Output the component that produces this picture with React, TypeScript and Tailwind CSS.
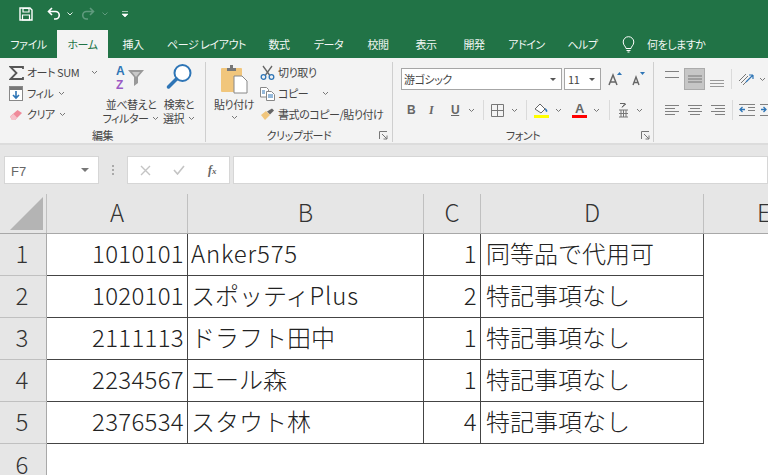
import type { ReactNode } from 'react';

const jp = "font-['Noto_Sans_CJK_JP','Liberation_Sans',sans-serif]";
const palt = "[font-feature-settings:'palt'] tracking-[-0.45px]";

function Chev({ className = '' }: { className?: string }) {
  return (
    <svg width="7" height="5" viewBox="0 0 7 5" className={`shrink-0 ${className}`}>
      <path d="M1 1l2.500 2.500L6 1" fill="none" stroke="#777" strokeWidth="1" />
    </svg>
  );
}

function Launcher() {
  return (
    <svg width="9" height="9" viewBox="0 0 9 9" className="shrink-0">
      <path d="M.5 8V.5H8M3 3l5 5M8 4.500V8H4.500" fill="none" stroke="#777" strokeWidth="1" />
    </svg>
  );
}

function Sep({ className = '' }: { className?: string }) {
  return <div className={`w-px h-[20px] bg-[#dadada] shrink-0 ${className}`} />;
}

function GroupLabel({ children }: { children: ReactNode }) {
  return <div className="text-[11px] leading-[14px] text-[#444] text-center">{children}</div>;
}

// latin runs in the sheet are a little wider than the fallback font
function Spaced({ text }: { text: string }) {
  return (
    <>
      {text.split(/([A-Za-z0-9]+)/).map((part, i) => {
        if (/^\d+$/.test(part)) {
          return (
            <span key={i} className="tracking-[0.3px]">
              {part}
            </span>
          );
        }
        if (/[A-Za-z]/.test(part)) {
          return (
            <span key={i} className="tracking-[0.8px]">
              {part}
            </span>
          );
        }
        return part;
      })}
    </>
  );
}

function CellText({ right, className = '', children }: { right?: boolean; className?: string; children: string }) {
  return (
    <div
      className={`flex items-center h-full pb-[3px] text-[24px] text-[#222] font-light whitespace-nowrap ${
        right ? 'justify-end pr-[3px]' : ''
      } ${className}`}
    >
      <Spaced text={children} />
    </div>
  );
}

const tabs = [
  { label: '挿入', w: 'w-[50px]' },
  { label: 'ページ レイアウト', w: 'w-[97px]' },
  { label: '数式', w: 'w-[48px]' },
  { label: 'データ', w: 'w-[51px]' },
  { label: '校閲', w: 'w-[48px]' },
  { label: '表示', w: 'w-[48px]' },
  { label: '開発', w: 'w-[48px]' },
  { label: 'アドイン', w: 'w-[57px]' },
  { label: 'ヘルプ', w: 'w-[55px]' },
];

const rows = [
  ['1010101', 'Anker575', '1', '同等品で代用可'],
  ['1020101', 'スポッティPlus', '2', '特記事項なし'],
  ['2111113', 'ドラフト田中', '1', '特記事項なし'],
  ['2234567', 'エール森', '1', '特記事項なし'],
  ['2376534', 'スタウト林', '4', '特記事項なし'],
];

const gridCols = 'grid-cols-[47px_141px_236px_57px_223px_1fr]';

function TitleBar() {
  return (
    <div className="flex items-center h-[30px] bg-[#217346] pl-[19px] pb-[3px]">
      <svg width="14" height="14" viewBox="0 0 14 14" className="shrink-0">
        <path d="M1 1h10l2 2v10H1z" fill="none" stroke="#fff" strokeWidth="1.400" />
        <path d="M4 1.500h6v3.500H4zM3.500 8h7v5h-7z" fill="none" stroke="#fff" strokeWidth="1.200" />
      </svg>
      <svg width="14" height="13" viewBox="0 0 14 13" className="shrink-0 ml-[14px]">
        <path d="M5 1L1.500 4.500 5 8M2 4.500h6.500a3.700 3.700 0 0 1 0 7.500H7" fill="none" stroke="#fff" strokeWidth="1.600" />
      </svg>
      <svg width="6" height="4" viewBox="0 0 6 4" className="shrink-0 ml-[6px]">
        <path d="M.5.500L3 3 5.500.5" fill="none" stroke="#e4efe9" strokeWidth="1" />
      </svg>
      <svg width="14" height="13" viewBox="0 0 14 13" className="shrink-0 ml-[8px]">
        <path d="M9 1l3.500 3.500L9 8M12 4.500H5.500a3.700 3.700 0 0 0 0 7.500H7" fill="none" stroke="#5f9a7d" strokeWidth="1.600" />
      </svg>
      <svg width="6" height="4" viewBox="0 0 6 4" className="shrink-0 ml-[7px]">
        <path d="M.5.500L3 3 5.500.5" fill="none" stroke="#5f9a7d" strokeWidth="1" />
      </svg>
      <svg width="6" height="6" viewBox="0 0 6 6" className="shrink-0 ml-[14px]">
        <path d="M0 .5h6M0 3h6L3 6z" fill="#fff" stroke="#fff" strokeWidth=".6" />
      </svg>
    </div>
  );
}

function TabBar() {
  return (
    <div className={`${palt} flex items-center h-[28px] bg-[#217346] text-[11px] text-[#f2f7f4]`}>
      <div className="w-[57px] text-center">ファイル</div>
      <div className="w-[51px] h-full flex items-center justify-center bg-[#f3f3f3] text-[#217346]">ホーム</div>
      {tabs.map((t) => (
        <div key={t.label} className={`${t.w} text-center whitespace-nowrap`}>
          {t.label}
        </div>
      ))}
      <svg width="13" height="17" viewBox="0 0 13 17" className="shrink-0 ml-[12px]">
        <path
          d="M4 12.500c0-2-2.800-3-2.800-6.500a5.300 5.300 0 0 1 10.600 0c0 3.500-2.800 4.500-2.800 6.500zM4.500 14.500h4M5.500 16h2"
          fill="none"
          stroke="#fff"
          strokeWidth="1"
        />
      </svg>
      <div className="ml-[12px] whitespace-nowrap">何をしますか</div>
    </div>
  );
}

function EditGroup() {
  return (
    <div className="w-[206px] shrink-0 flex flex-col border-r border-[#cfcfcf] my-[4px] h-[80px]">
      <div className="flex h-[68px]">
        <div className="w-[104px] shrink-0 flex flex-col text-[11px] text-[#444] pl-[9px]">
          <div className="flex items-center h-[21px]">
            <svg width="15" height="14" viewBox="0 0 15 14" className="shrink-0">
              <path d="M14 3V1H1.500L7.500 7l-6 6H14v-2" fill="none" stroke="#555" strokeWidth="1.800" />
            </svg>
            <span className="ml-[3px] whitespace-nowrap">オート SUM</span>
            <Chev className="ml-[12px]" />
          </div>
          <div className="flex items-center h-[21px]">
            <svg width="14" height="15" viewBox="0 0 14 15" className="shrink-0">
              <rect x=".5" y=".5" width="13" height="14" fill="#fff" stroke="#888" />
              <rect x="1" y="1" width="12" height="3" fill="#777" />
              <path d="M7 5v7M4 9l3 3 3-3" fill="none" stroke="#2e75b6" strokeWidth="1.600" />
            </svg>
            <span className="ml-[4px] whitespace-nowrap">フィル</span>
            <Chev className="ml-[5px]" />
          </div>
          <div className="flex items-center h-[21px]">
            <svg width="14" height="12" viewBox="0 0 14 12" className="shrink-0">
              <path d="M1 7.500L8.500 1 13 4l-7 7H3z" fill="#ef8a9a" />
              <path d="M1 7.500L4.500 5 8 8.500 6 11H3z" fill="#f6c1ca" />
            </svg>
            <span className="ml-[4px] whitespace-nowrap">クリア</span>
            <Chev className="ml-[4px]" />
          </div>
        </div>
        <div className="w-[54px] shrink-0 flex flex-col items-center text-[11px] leading-[14px] text-[#444]">
          <svg width="30" height="26" viewBox="0 0 30 26" className="shrink-0 mt-[2px] mb-[7px]">
            <text x="0" y="11" fontSize="12" fontWeight="700" fill="#2e75b6" fontFamily="Liberation Sans">A</text>
            <text x="0" y="25" fontSize="12" fontWeight="700" fill="#9b59c4" fontFamily="Liberation Sans">Z</text>
            <path d="M12 6h16l-6 7v6l-4 3v-9z" fill="#999" />
            <path d="M16 8h8l-4 5z" fill="#c9c9c9" />
          </svg>
          <div className="whitespace-nowrap">並べ替えと</div>
          <div className="flex items-center whitespace-nowrap">
            フィルター
            <Chev className="ml-[4px]" />
          </div>
        </div>
        <div className="w-[42px] shrink-0 flex flex-col items-center text-[11px] leading-[14px] text-[#444]">
          <svg width="27" height="28" viewBox="0 0 27 28" className="shrink-0 mt-[1px] mb-[6px]">
            <circle cx="16.500" cy="10" r="8" fill="#fff" stroke="#2e75b6" strokeWidth="2" />
            <path d="M10.500 16L2.500 24" stroke="#2e75b6" strokeWidth="3.500" strokeLinecap="round" />
          </svg>
          <div className="whitespace-nowrap">検索と</div>
          <div className="flex items-center whitespace-nowrap">
            選択
            <Chev className="ml-[4px]" />
          </div>
        </div>
      </div>
      <GroupLabel>編集</GroupLabel>
    </div>
  );
}

function ClipboardGroup() {
  return (
    <div className="w-[187px] shrink-0 flex flex-col border-r border-[#cfcfcf] my-[4px] h-[80px]">
      <div className="flex h-[68px] text-[11px] text-[#444]">
        <div className="w-[50px] ml-[3px] shrink-0 flex flex-col items-center">
          <svg width="27" height="30" viewBox="0 0 27 30" className="shrink-0 mt-[2px]">
            <rect x="0" y="4" width="21" height="24" rx="1" fill="#f1c67c" />
            <path d="M6 4h3V1h3v3h3v3H6z" fill="#777" />
            <path d="M13 12h8l5 5v12H13z" fill="#fff" stroke="#888" />
          </svg>
          <div className="whitespace-nowrap leading-[14px] mt-[3px]">貼り付け</div>
          <Chev className="mt-[4px]" />
        </div>
        <div className="flex flex-col ml-[1px]">
          <div className="flex items-center h-[21px]">
            <svg width="15" height="15" viewBox="0 0 15 15" className="shrink-0">
              <path d="M3 1l6.500 9M12 1L5.500 10" stroke="#666" strokeWidth="1.300" />
              <circle cx="3.500" cy="12" r="2.300" fill="none" stroke="#2e75b6" strokeWidth="1.300" />
              <circle cx="11.500" cy="12" r="2.300" fill="none" stroke="#2e75b6" strokeWidth="1.300" />
            </svg>
            <span className="ml-[3px] whitespace-nowrap">切り取り</span>
          </div>
          <div className="flex items-center h-[21px]">
            <svg width="15" height="14" viewBox="0 0 15 14" className="shrink-0">
              <path d="M.5.500h6l2 2V10H.5z" fill="#fff" stroke="#888" />
              <path d="M6.500 4.500h5l3 3v6h-8z" fill="#fff" stroke="#888" />
              <path d="M8 8h5M8 10h5M2 4h3M2 6h3" stroke="#2e75b6" />
            </svg>
            <span className="ml-[3px] whitespace-nowrap">コピー</span>
            <Chev className="ml-[14px]" />
          </div>
          <div className="flex items-center h-[21px]">
            <svg width="15" height="13" viewBox="0 0 15 13" className="shrink-0">
              <path d="M1 7l5-4 4 4-5 5z" fill="#f1c67c" />
              <path d="M7 3.500L12 .5l2 2-4 4z" fill="#666" />
            </svg>
            <span className="ml-[3px] whitespace-nowrap">書式のコピー/貼り付け</span>
          </div>
        </div>
      </div>
      <div className="relative">
        <GroupLabel>クリップボード</GroupLabel>
        <div className="absolute right-[4px] top-[3px]">
          <Launcher />
        </div>
      </div>
    </div>
  );
}

function FontGroup() {
  return (
    <div className="w-[261px] shrink-0 flex flex-col border-r border-[#cfcfcf] my-[4px] h-[80px]">
      <div className="h-[68px] pl-[8px] pt-[6px]">
        <div className="flex items-center h-[22px]">
          <div className="flex items-center justify-between w-[161px] h-full bg-white border border-[#a6a6a6] pl-[2px] pr-[5px] text-[11px] text-[#444]">
            游ゴシック
            <svg width="6" height="3" viewBox="0 0 6 3"><path d="M0 0h6L3 3z" fill="#555" /></svg>
          </div>
          <div className="flex items-center justify-between w-[37px] h-full ml-[2px] bg-white border border-[#a6a6a6] pl-[3px] pr-[5px] text-[11px] text-[#444]">
            11
            <svg width="6" height="3" viewBox="0 0 6 3"><path d="M0 0h6L3 3z" fill="#555" /></svg>
          </div>
          <svg width="14" height="14" viewBox="0 0 14 14" className="shrink-0 ml-[7px]">
            <path d="M1 13L5 3l4 10M2.500 10h5" fill="none" stroke="#666" strokeWidth="1.500" />
            <path d="M9 3l2.500-3L14 3z" fill="#2e75b6" />
          </svg>
          <svg width="14" height="14" viewBox="0 0 14 14" className="shrink-0 ml-[9px]">
            <path d="M2 13l3-8 3 8M3 10.500h4" fill="none" stroke="#666" strokeWidth="1.400" />
            <path d="M9 0h5l-2.500 3z" fill="#2e75b6" />
          </svg>
        </div>
        <div className="flex items-center h-[20px] mt-[10px] text-[#666]">
          <span className="w-[9px] ml-[6px] text-[12px] font-bold font-['Liberation_Sans']">B</span>
          <span className="w-[8px] ml-[13px] text-[12px] italic font-['Liberation_Serif'] font-bold">I</span>
          <span className="w-[9px] ml-[14px] text-[12px] font-bold underline font-['Liberation_Sans']">U</span>
          <Chev className="ml-[8px]" />
          <Sep className="ml-[8px]" />
          <svg width="13" height="13" viewBox="0 0 13 13" className="shrink-0 ml-[7px]">
            <path d="M.5.500h12v12H.5zM6.500.500v12M.5 6.500h12" fill="none" stroke="#777" />
          </svg>
          <Chev className="ml-[7px]" />
          <Sep className="ml-[8px]" />
          <svg width="15" height="16" viewBox="0 0 15 16" className="shrink-0 ml-[7px]">
            <path d="M1 7l5-5 5 5-4 4z" fill="#fff" stroke="#666" />
            <path d="M11 6c2 1 3 3 2 4-1 0-2-1-2-4z" fill="#2e75b6" />
            <rect x="0" y="13" width="15" height="3" fill="#ffff00" />
          </svg>
          <Chev className="ml-[6px]" />
          <div className="flex flex-col items-center ml-[10px] w-[15px] shrink-0">
            <span className="text-[13px] leading-[13px] font-bold font-['Liberation_Sans']">A</span>
            <div className="w-[15px] h-[3px] bg-[#ff0000]" />
          </div>
          <Chev className="ml-[6px]" />
          <Sep className="ml-[9px]" />
          <svg width="9" height="16" viewBox="0 0 9 16" className="shrink-0 ml-[9px]">
            <path d="M1 1.500h5l-3 4M7 2L3 5" fill="none" stroke="#666" />
            <path d="M0 8h9M0 15h9M2 8v7M4.500 8v7M7 8v7M0 11.500h9" stroke="#777" />
          </svg>
          <Chev className="ml-[8px]" />
        </div>
      </div>
      <div className="relative">
        <GroupLabel>フォント</GroupLabel>
        <div className="absolute right-[3px] top-[3px]">
          <Launcher />
        </div>
      </div>
    </div>
  );
}

function AlignGroup() {
  return (
    <div className="flex-1 overflow-hidden pl-[11px] pt-[10px]">
      <div className="flex items-center h-[22px] w-[200px]">
        <svg width="14" height="22" viewBox="0 0 14 22" className="shrink-0">
          <path d="M0 3.500h14M0 9.500h14" stroke="#808080" />
        </svg>
        <div className="ml-[5px] w-[21px] h-[22px] flex items-center justify-center bg-[#c6c6c6] border border-[#ababab]">
          <svg width="14" height="8" viewBox="0 0 14 8">
            <path d="M0 1h14M0 4h14M0 7h14" stroke="#777" />
          </svg>
        </div>
        <svg width="14" height="22" viewBox="0 0 14 22" className="shrink-0 ml-[5px]">
          <path d="M0 12.500h14M0 15.500h14M0 18.500h14" stroke="#999" />
        </svg>
        <Sep className="ml-[7px]" />
        <svg width="16" height="15" viewBox="0 0 16 15" className="shrink-0 ml-[6px]">
          <path d="M1 9l7-7M3 11l7-7M5 13l7-7" stroke="#777" />
          <path d="M8 10l7-7M15 3h-4M15 3v4" fill="none" stroke="#2e75b6" strokeWidth="1.200" />
        </svg>
        <Chev className="ml-[5px]" />
      </div>
      <div className="flex items-center h-[20px] mt-[10px] w-[200px]">
        <svg width="14" height="12" viewBox="0 0 14 12" className="shrink-0">
          <path d="M0 1.500h14M0 4.500h10M0 7.500h14M0 10.500h10" stroke="#808080" />
        </svg>
        <svg width="14" height="12" viewBox="0 0 14 12" className="shrink-0 ml-[9px]">
          <path d="M0 1.500h14M2 4.500h10M0 7.500h14M2 10.500h10" stroke="#808080" />
        </svg>
        <svg width="14" height="12" viewBox="0 0 14 12" className="shrink-0 ml-[9px]">
          <path d="M0 1.500h14M4 4.500h10M0 7.500h14M4 10.500h10" stroke="#808080" />
        </svg>
        <Sep className="ml-[7px]" />
        <svg width="16" height="12" viewBox="0 0 16 12" className="shrink-0 ml-[6px]">
          <path d="M0 .5h16M0 11.500h16" fill="none" stroke="#808080" />
          <path d="M9 3.500h7M9 6.500h7" fill="none" stroke="#808080" />
          <path d="M6 5.500H1M3.500 3L1 5.500 3.500 8" fill="none" stroke="#2e75b6" strokeWidth="1.300" />
        </svg>
        <svg width="16" height="12" viewBox="0 0 16 12" className="shrink-0 ml-[5px]">
          <path d="M0 .5h16M0 11.500h16" fill="none" stroke="#808080" />
          <path d="M9 3.500h7M9 6.500h7" fill="none" stroke="#808080" />
          <path d="M1 5.500h5M3.500 3L6 5.500 3.500 8" fill="none" stroke="#2e75b6" strokeWidth="1.300" />
        </svg>
      </div>
    </div>
  );
}

function Ribbon() {
  return (
    <div className={`${palt} flex h-[87px] bg-[#f3f3f3] border-b-2 border-[#dcdcdc]`}>
      <EditGroup />
      <ClipboardGroup />
      <FontGroup />
      <AlignGroup />
    </div>
  );
}

function FormulaBar() {
  return (
    <div className="flex items-center h-[49px] bg-[#e6e6e6] pl-[4px] pt-[11px] pb-[10px]">
      <div className="flex items-center justify-between w-[95px] h-full bg-white border border-[#d6d6d6] pl-[6px] pr-[9px] pt-[3px] text-[13px] text-[#666] font-['Liberation_Sans']">
        F7
        <svg width="8" height="4" viewBox="0 0 8 4" className="-mt-[3px]"><path d="M0 0h8L4 4z" fill="#777" /></svg>
      </div>
      <div className="w-[28px] flex flex-col items-center gap-[2px]">
        <div className="w-[2px] h-[2px] bg-[#aaa]" />
        <div className="w-[2px] h-[2px] bg-[#aaa]" />
        <div className="w-[2px] h-[2px] bg-[#aaa]" />
      </div>
      <div className="flex items-center w-[103px] h-full bg-white border border-[#d6d6d6]">
        <svg width="11" height="11" viewBox="0 0 11 11" className="shrink-0 ml-[12px]">
          <path d="M1 1l9 9M10 1l-9 9" stroke="#c4c4c4" strokeWidth="1.400" />
        </svg>
        <svg width="12" height="10" viewBox="0 0 12 10" className="shrink-0 ml-[22px]">
          <path d="M1 5l3.500 4L11 1" fill="none" stroke="#c4c4c4" strokeWidth="1.600" />
        </svg>
        <span className="ml-[23px] text-[12px] italic font-bold text-[#666] font-['Liberation_Serif']">
          f<span className="text-[9px]">x</span>
        </span>
      </div>
      <div className="flex-1 h-full ml-[3px] bg-white border border-[#d6d6d6]" />
    </div>
  );
}

function Sheet() {
  return (
    <div className={`${jp} flex-1 bg-white`}>
      <div className={`grid ${gridCols} h-[40px] bg-[#e6e6e6] border-b border-[#a8a8a8] text-[24px] font-light text-[#333] text-center`}>
        <div className="relative border-r border-[#c0c0c0]">
          <svg width="33" height="33" viewBox="0 0 33 33" className="absolute right-[3px] bottom-[3px]">
            <path d="M33 0v33H0z" fill="#b4b4b4" />
          </svg>
        </div>
        {['A', 'B', 'C', 'D', 'E'].map((c) => (
          <div
            key={c}
            className={`flex items-center pb-[3px] border-r border-[#c0c0c0] overflow-hidden ${
              c === 'E' ? 'border-r-0 justify-start pl-[53px]' : 'justify-center'
            }`}
          >
            {c}
          </div>
        ))}
      </div>
      {rows.map((r, i) => (
        <div key={r[0]} className={`grid ${gridCols} h-[42px]`}>
          <div className="flex items-center justify-center pb-[3px] pr-[2px] bg-[#e6e6e6] border-b border-[#c0c0c0] border-r border-r-[#a8a8a8] text-[24px] font-light text-[#333]">
            {i + 1}
          </div>
          <div className="border-r border-b border-[#444]">
            <CellText right>{r[0]}</CellText>
          </div>
          <div className="border-r border-b border-[#444]">
            <CellText className="pl-[3px]">{r[1]}</CellText>
          </div>
          <div className="border-r border-b border-[#444]">
            <CellText right>{r[2]}</CellText>
          </div>
          <div className="border-r border-b border-[#444]">
            <CellText className="pl-[5px]">{r[3]}</CellText>
          </div>
          <div />
        </div>
      ))}
      <div className={`grid ${gridCols} h-[31px] overflow-hidden`}>
        <div className="flex items-start justify-center pt-[2px] pr-[2px] bg-[#e6e6e6] border-r border-[#a8a8a8] text-[24px] font-light text-[#333]">
          6
        </div>
      </div>
    </div>
  );
}

export default function App() {
  return (
    <div className={`${jp} flex flex-col w-[768px] h-[475px] overflow-hidden bg-white`}>
      <TitleBar />
      <TabBar />
      <Ribbon />
      <FormulaBar />
      <Sheet />
    </div>
  );
}
